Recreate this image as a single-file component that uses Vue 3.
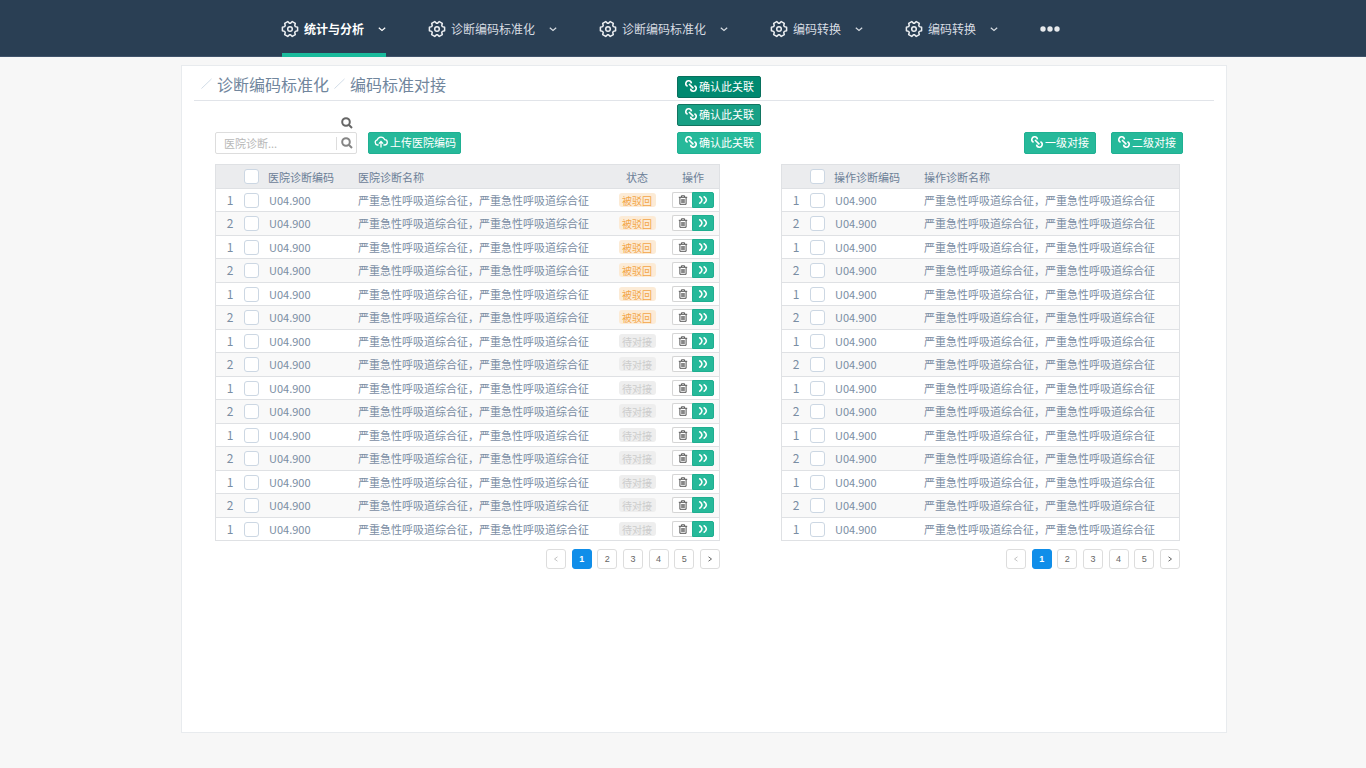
<script setup>
import { ref } from 'vue'

const navItems = [
  { label: '统计与分析', active: true },
  { label: '诊断编码标准化' },
  { label: '诊断编码标准化' },
  { label: '编码转换' },
  { label: '编码转换' }
]

const name = '严重急性呼吸道综合征，严重急性呼吸道综合征'
const rows = Array.from({ length: 15 }, (_, i) => ({
  no: (i % 2) + 1,
  code: 'U04.900',
  name,
  rejected: i < 6
}))
const pages = [1, 2, 3, 4, 5]
const keyword = ref('')

function gearPath() {
  const pts = []
  for (let t = 0; t < 6; t++) {
    const base = t * 60
    for (const [r, a] of [[5.9, -24], [7.8, -13], [7.8, 13], [5.9, 24]]) {
      const rad = ((base + a) * Math.PI) / 180
      pts.push(`${(9 + r * Math.cos(rad)).toFixed(2)} ${(9 + r * Math.sin(rad)).toFixed(2)}`)
    }
  }
  return `M${pts.join('L')}Z`
}
const gear = gearPath()
const linkPath = 'M2.6 6.2A2.8 2.8 0 1 1 6.4 3.4M4 4L8.4 8.4M9.4 5.8A2.8 2.8 0 1 1 5.6 8.6'
</script>

<template>
  <div class="page">
    <header class="topbar">
      <nav class="nav" aria-label="主导航">
        <a v-for="(item, i) in navItems" :key="i" href="#" class="nav-item" :class="{ active: item.active }">
          <svg class="gear" viewBox="0 0 18 18" aria-hidden="true">
            <path :d="gear" />
            <circle cx="9" cy="9" r="2.3" />
          </svg>
          <span class="nav-label">{{ item.label }}</span>
          <svg class="chevron" viewBox="0 0 8 8" aria-hidden="true"><path d="M0.8 2.8L4 5.4L7.2 2.8" /></svg>
        </a>
        <button type="button" class="more" aria-label="更多">
          <svg viewBox="0 0 20 6" aria-hidden="true">
            <circle cx="3" cy="3" r="2.7" /><circle cx="10" cy="3" r="2.7" /><circle cx="17" cy="3" r="2.7" />
          </svg>
        </button>
      </nav>
    </header>

    <main class="card">
      <div class="crumbs">
        <svg class="slash" viewBox="0 0 12 12" aria-hidden="true"><path d="M0.5 11.5L11.5 1" /></svg>
        <a href="#" class="crumb">诊断编码标准化</a>
        <svg class="slash" viewBox="0 0 12 12" aria-hidden="true"><path d="M0.5 11.5L11.5 1" /></svg>
        <a href="#" class="crumb">编码标准对接</a>
      </div>

      <div class="content">
        <div class="toolbar">
          <div class="search-area">
            <svg class="lens dark" viewBox="0 0 12 12" aria-hidden="true">
              <circle cx="5" cy="5" r="3.8" /><path d="M8 8L11 11" />
            </svg>
            <div class="search">
              <input v-model="keyword" type="text" aria-label="医院诊断" placeholder="医院诊断..." />
              <button type="button" aria-label="搜索">
                <svg class="lens" viewBox="0 0 12 12" aria-hidden="true">
                  <circle cx="5" cy="5" r="3.8" /><path d="M8 8L11 11" />
                </svg>
              </button>
            </div>
          </div>
          <button type="button" class="btn upload">
            <svg class="cloud" viewBox="0 0 14 12" aria-hidden="true">
              <path d="M4.6 9H3.4A2.6 2.6 0 0 1 3.2 3.9A3.9 3.9 0 0 1 10.6 3.6A2.7 2.7 0 0 1 10.6 9H9.4" />
              <path d="M7 11.6V5.8M4.9 7.6L7 5.5L9.1 7.6" />
            </svg>
            上传医院编码
          </button>
          <div class="confirm">
            <button v-for="s in ['pressed', 'hover', 'normal']" :key="s" type="button" class="btn" :class="s">
              <svg class="link" viewBox="0 0 12 12" aria-hidden="true"><path :d="linkPath" /></svg>确认此关联
            </button>
          </div>
          <div class="levels">
            <button v-for="l in ['一级对接', '二级对接']" :key="l" type="button" class="btn level">
              <svg class="link" viewBox="0 0 12 12" aria-hidden="true"><path :d="linkPath" /></svg>{{ l }}
            </button>
          </div>
        </div>

        <div class="panels">
          <section class="panel hospital">
            <table>
              <colgroup>
                <col class="c-no" /><col class="c-check" /><col class="c-code" /><col /><col class="c-status" /><col class="c-action" />
              </colgroup>
              <thead>
                <tr>
                  <th></th>
                  <th><input type="checkbox" aria-label="全选" /></th>
                  <th>医院诊断编码</th>
                  <th>医院诊断名称</th>
                  <th class="center">状态</th>
                  <th class="center">操作</th>
                </tr>
              </thead>
              <tbody>
                <tr v-for="(row, i) in rows" :key="i">
                  <td class="center no">{{ row.no }}</td>
                  <td><input type="checkbox" aria-label="选择此行" /></td>
                  <td class="code">{{ row.code }}</td>
                  <td>{{ row.name }}</td>
                  <td>
                    <span class="tag" :class="{ rejected: row.rejected }">{{ row.rejected ? '被驳回' : '待对接' }}</span>
                  </td>
                  <td>
                    <div class="actions">
                      <button type="button" class="trash" aria-label="删除">
                        <svg viewBox="0 0 10 10" aria-hidden="true">
                          <path d="M0.8 2.3H9.2M3.4 2V0.8H6.6V2M1.9 2.5V9.3H8.1V2.5M3.9 4V8M5 4V8M6.1 4V8" />
                        </svg>
                      </button>
                      <button type="button" class="forward" aria-label="对接">
                        <svg viewBox="0 0 10 8" aria-hidden="true"><path d="M1.2 0.4Q3.8 2 4 4Q3.8 6 1.2 7.6M5.6 0.4Q8.2 2 8.4 4Q8.2 6 5.6 7.6" /></svg>
                      </button>
                    </div>
                  </td>
                </tr>
              </tbody>
            </table>
            <nav class="pager" aria-label="医院诊断分页">
              <button type="button" disabled aria-label="上一页"><svg viewBox="0 0 6 6" aria-hidden="true"><path d="M4.5 0.8L1.5 3L4.5 5.2" /></svg></button>
              <button v-for="p in pages" :key="p" type="button" :class="{ current: p === 1 }">{{ p }}</button>
              <button type="button" aria-label="下一页"><svg viewBox="0 0 6 6" aria-hidden="true"><path d="M1.5 0.8L4.5 3L1.5 5.2" /></svg></button>
            </nav>
          </section>

          <section class="panel operation">
            <table>
              <colgroup>
                <col class="c-no" /><col class="c-check" /><col class="c-code" /><col />
              </colgroup>
              <thead>
                <tr>
                  <th></th>
                  <th><input type="checkbox" aria-label="全选" /></th>
                  <th>操作诊断编码</th>
                  <th>操作诊断名称</th>
                </tr>
              </thead>
              <tbody>
                <tr v-for="(row, i) in rows" :key="i">
                  <td class="center no">{{ row.no }}</td>
                  <td><input type="checkbox" aria-label="选择此行" /></td>
                  <td class="code">{{ row.code }}</td>
                  <td>{{ row.name }}</td>
                </tr>
              </tbody>
            </table>
            <nav class="pager" aria-label="操作诊断分页">
              <button type="button" disabled aria-label="上一页"><svg viewBox="0 0 6 6" aria-hidden="true"><path d="M4.5 0.8L1.5 3L4.5 5.2" /></svg></button>
              <button v-for="p in pages" :key="p" type="button" :class="{ current: p === 1 }">{{ p }}</button>
              <button type="button" aria-label="下一页"><svg viewBox="0 0 6 6" aria-hidden="true"><path d="M1.5 0.8L4.5 3L1.5 5.2" /></svg></button>
            </nav>
          </section>
        </div>
      </div>
    </main>
  </div>
</template>

<style>
body {
  background: #f7f7f7;
}
</style>

<style scoped>
.page,
.page * {
  box-sizing: border-box;
}
.page {
  min-height: 100vh;
  display: flex;
  flex-direction: column;
  font-family: 'Noto Sans CJK SC', sans-serif;
  font-size: 11px;
  line-height: 16px;
  color: #7a8da3;
}
svg {
  display: block;
  flex: none;
  fill: none;
  stroke: currentColor;
}
button,
input {
  font: inherit;
  margin: 0;
  padding: 0;
}
a {
  color: inherit;
  text-decoration: none;
}

.topbar {
  background: #2a3f54;
  border-bottom: 1px solid #40536b;
}
.nav {
  display: flex;
  gap: 42px;
  height: 56px;
  padding-left: 281px;
}
.nav-item {
  position: relative;
  display: flex;
  align-items: center;
  padding-top: 2px;
  font-size: 12px;
  color: #d8dde3;
  white-space: nowrap;
}
.nav-item.active {
  color: #fff;
  font-weight: 700;
}
.nav-item.active::after {
  content: '';
  position: absolute;
  left: 1px;
  right: 0;
  bottom: -1px;
  height: 4px;
  background: #1abb9c;
}
.gear {
  width: 18px;
  height: 18px;
  stroke: #eceff2;
  stroke-width: 1.5;
  stroke-linejoin: round;
}
.nav-label {
  margin: 0 14px 0 5px;
}
.chevron {
  width: 8px;
  height: 8px;
  stroke-width: 1.2;
}
.more {
  border: 0;
  background: none;
  color: #e6e9ec;
  padding-top: 2px;
}
.more svg {
  width: 20px;
  height: 6px;
  fill: currentColor;
  stroke: none;
}

.card {
  flex: 1;
  margin: 8px 139px 35px 181px;
  padding: 0 12px;
  background: #fff;
  border: 1px solid #e8ebee;
}
.crumbs {
  display: flex;
  align-items: center;
  height: 35px;
  padding: 1px 0 0 7px;
  border-bottom: 1px solid #e1e4e9;
  font-size: 16px;
  line-height: 24px;
  color: #71869d;
}
.crumb {
  margin: 0 5px;
}
.slash {
  width: 11px;
  height: 11px;
  stroke: #cdd9e5;
}

.content {
  padding: 0 34px 0 21px;
}
.toolbar {
  display: flex;
  align-items: flex-end;
  height: 53px;
  margin-right: -3px;
}
.search-area {
  width: 142px;
}
.lens {
  width: 12px;
  height: 12px;
  stroke-width: 2;
  color: #858585;
}
.lens.dark {
  color: #666;
  margin: 0 0 3px 126px;
}
.search {
  display: flex;
  align-items: center;
  height: 22px;
  border: 1px solid #ddd;
  border-radius: 2px;
  background: #fff;
}
.search input {
  flex: 1;
  min-width: 0;
  height: 20px;
  padding-left: 8px;
  border: 0;
  outline: 0;
  background: none;
  color: #7a8da3;
}
.search input::placeholder {
  color: #b8b8b8;
}
.search button {
  width: 20px;
  height: 13px;
  padding-left: 4px;
  border: 0;
  border-left: 1px solid #ddd;
  background: none;
}
.btn {
  display: flex;
  align-items: center;
  gap: 2px;
  height: 22px;
  padding: 0 6px 2px 7px;
  border: 1px solid #1fb092;
  border-radius: 2px;
  background: #26b99a;
  color: #fff;
  white-space: nowrap;
}
.btn.pressed {
  background: #008970;
  border-color: #08705d;
}
.btn.hover {
  background: #18a085;
  border-color: #127561;
}
.btn.level {
  padding: 0 6px 2px;
}
.link {
  width: 12px;
  height: 12px;
  stroke-width: 1.6;
}
.upload {
  margin-left: 11px;
  padding: 0 4px 2px 5px;
}
.cloud {
  width: 14px;
  height: 12px;
  stroke-width: 1.3;
}
.confirm {
  display: flex;
  flex-direction: column;
  gap: 6px;
  margin-left: 216px;
}
.levels {
  display: flex;
  gap: 15px;
  margin-left: auto;
}

.panels {
  display: flex;
  gap: 61px;
  margin-top: 10px;
}
.panel {
  min-width: 0;
}
.hospital {
  flex: 505 1 0;
}
.operation {
  flex: 399 1 0;
}
table {
  width: 100%;
  table-layout: fixed;
  border: 1px solid #dfe1e4;
  border-bottom: 0;
  border-spacing: 0;
}
.c-no {
  width: 28px;
}
.c-check {
  width: 24px;
}
.c-code {
  width: 90px;
}
.c-status {
  width: 60px;
}
.c-action {
  width: 52px;
}
th,
td {
  height: 23px;
  padding: 0;
  border-bottom: 1px solid #dfe1e4;
  text-align: left;
  vertical-align: middle;
  white-space: nowrap;
}
th {
  height: 24px;
  background: #ebecee;
  color: #6b8097;
  font-weight: 400;
}
tbody tr:nth-child(even) td {
  height: 24px;
  padding-bottom: 1px;
  background: #f9f9f9;
}
.center {
  text-align: center;
}
.no {
  font-size: 12px;
}
td.code {
  padding-left: 1px;
}
input[type='checkbox'] {
  appearance: none;
  display: block;
  width: 15px;
  height: 15px;
  border: 1px solid #ccd7e3;
  border-radius: 3px;
  background: #fff;
}
.tag {
  display: block;
  width: 37px;
  height: 14px;
  margin: 0 auto;
  border-radius: 3px;
  background: #eee;
  color: #ccc;
  font-size: 10px;
  line-height: 15px;
  text-align: center;
}
.tag.rejected {
  background: #fcebd6;
  color: #f3a648;
}
.actions {
  display: flex;
  width: 42px;
  height: 16px;
  margin: 0 auto;
}
.actions button {
  display: flex;
  align-items: center;
  justify-content: center;
}
.trash {
  width: 20px;
  border: 1px solid #d5d5d5;
  border-right: 0;
  border-radius: 2px 0 0 2px;
  background: #fff;
  color: #555;
}
.trash svg {
  width: 10px;
  height: 10px;
}
.forward {
  width: 22px;
  border: 1px solid #1fae90;
  border-radius: 0 2px 2px 0;
  background: #26b99a;
  color: #fff;
}
.forward svg {
  width: 10px;
  height: 8px;
  stroke-width: 1.6;
}

.pager {
  display: flex;
  justify-content: space-between;
  width: 174px;
  margin: 8px 0 0 auto;
}
.pager button {
  display: flex;
  align-items: center;
  justify-content: center;
  width: 20px;
  height: 20px;
  border: 1px solid #ddd;
  border-radius: 3px;
  background: #fff;
  color: #666;
  font-family: 'Liberation Sans', sans-serif;
  font-size: 9px;
}
.pager button:disabled {
  color: #c4c4c4;
}
.pager button.current {
  border-color: #108ee9;
  background: #108ee9;
  color: #fff;
  font-weight: 700;
}
.pager svg {
  width: 6px;
  height: 6px;
}
</style>
